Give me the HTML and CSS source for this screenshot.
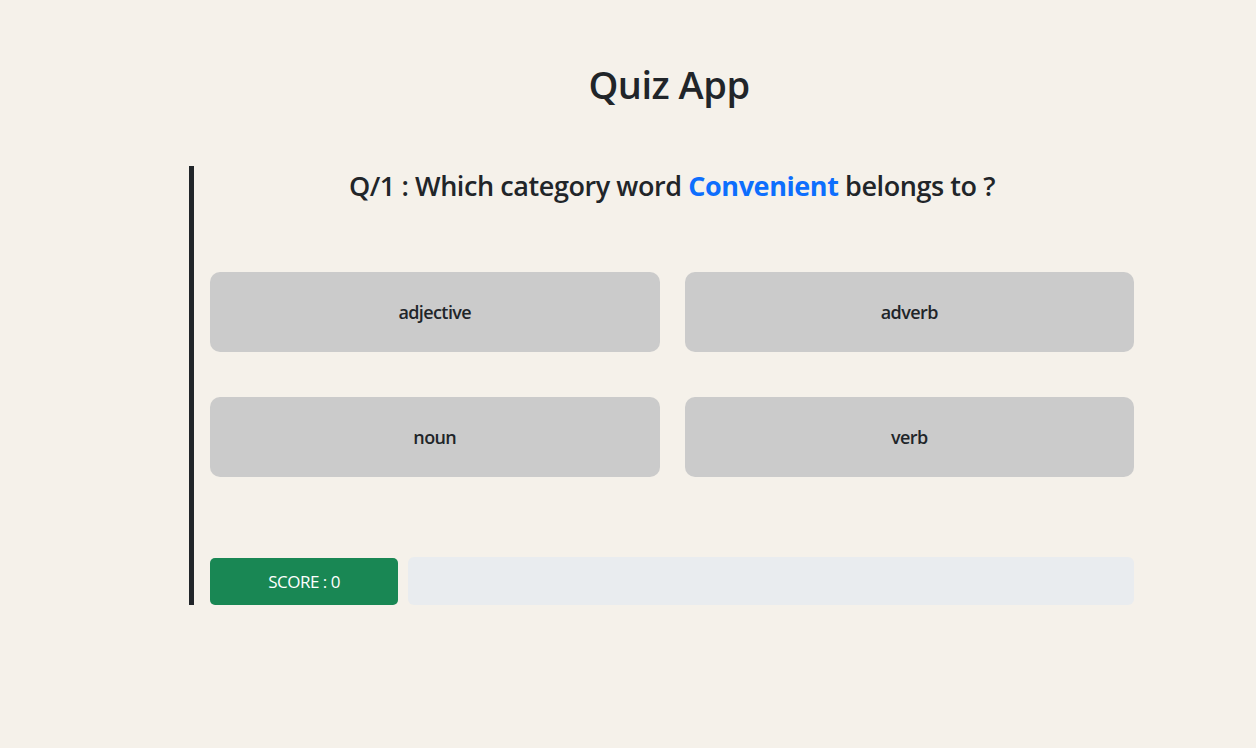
FILE: index.html
```html
<!DOCTYPE html>
<html lang="en">
<head>
<meta charset="utf-8">
<title>Quiz App</title>
<link rel="stylesheet" href="styles.css">
</head>
<body>
<main class="app">
  <h1 class="title">Quiz App</h1>
  <section class="quiz">
    <h2 class="question">Q/1 : Which category word <span class="word">Convenient</span> belongs to ?</h2>
    <div class="options">
      <button class="option">adjective</button>
      <button class="option">adverb</button>
      <button class="option">noun</button>
      <button class="option">verb</button>
    </div>
    <div class="footer">
      <button class="score">SCORE : 0</button>
      <div class="progress"></div>
    </div>
  </section>
</main>
</body>
</html>
```

FILE: styles.css
```css
* { box-sizing: border-box; }
html, body { margin: 0; padding: 0; }
body {
  background: #f5f1ea;
  color: #212529;
  font-family: "Open Sans", "Noto Sans", sans-serif;
}
.app {
  margin-left: 189px;
  width: 945px;
  padding-top: 58px;
}
.title {
  margin: 0 0 56px 15px;
  text-align: center;
  font-size: 38px;
  font-weight: 600;
  line-height: 52px;
  letter-spacing: -0.5px;
}
.quiz {
  border-left: 5px solid #212529;
  padding-left: 16px;
}
.question {
  margin: 0;
  text-align: center;
  font-size: 27px;
  font-weight: 600;
  line-height: 40px;
  letter-spacing: -0.42px;
}
.word { color: #0d6efd; font-weight: 700; }
.options {
  margin-top: 66px;
  display: grid;
  grid-template-columns: 1fr 1fr;
  column-gap: 25px;
  row-gap: 45px;
}
.option {
  height: 80px;
  border: none;
  border-radius: 10px;
  background: #cbcbcb;
  color: #212529;
  font-family: inherit;
  font-size: 18px;
  font-weight: 600;
  letter-spacing: -0.6px;
}
.footer {
  margin-top: 80px;
  display: flex;
  gap: 10px;
  align-items: center;
}
.score {
  width: 188px;
  height: 47px;
  border: none;
  border-radius: 5px;
  background: #198754;
  color: #fff;
  font-family: inherit;
  font-size: 17px;
  letter-spacing: -0.5px;
}
.progress {
  flex: 1;
  height: 48px;
  border-radius: 6px;
  background: #e9ecef;
}
```
